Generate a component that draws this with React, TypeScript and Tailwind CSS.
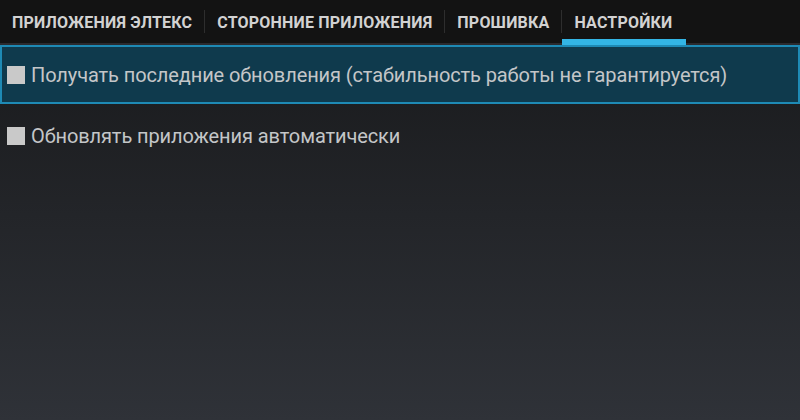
import React from "react";

const tabs = ["ПРИЛОЖЕНИЯ ЭЛТЕКС", "СТОРОННИЕ ПРИЛОЖЕНИЯ", "ПРОШИВКА", "НАСТРОЙКИ"];

function Checkbox() {
  return <span className="w-[18px] h-[18px] bg-[#c9c9c9] shrink-0" />;
}

export default function App() {
  return (
    <div
      className="w-[800px] h-[420px] flex flex-col bg-gradient-to-b from-[#17181a] to-[#2f3238] overflow-hidden"
      style={{ fontFamily: "Roboto, 'Noto Sans', sans-serif" }}
    >
      <div className="h-[45px] bg-[#131313] flex items-stretch border-b-2 border-[#2b2b2f] shrink-0">
        {tabs.map((t, i) => (
          <div key={t} className="flex items-stretch">
            {i > 0 && <div className="w-px bg-[#2e2e2e] my-[10px]" />}
            <div className="relative flex items-center pt-[3px] px-[12px] text-[16px] font-bold tracking-[0.2px] text-[#d2d2d2]">
              {t}
              {i === 3 && (
                <span className="absolute left-0 right-[-1px] bottom-[-2px] h-[6px] bg-[#33b5e5]" />
              )}
            </div>
          </div>
        ))}
      </div>
      <div className="h-[59px] bg-[#0f3a4d] border-2 border-[#1e8ab5] flex items-center pl-[5px] gap-[6px]">
        <Checkbox />
        <span className="text-[20px] tracking-[-0.1px] text-[#c4c6c8]">
          Получать последние обновления (стабильность работы не гарантируется)
        </span>
      </div>
      <div className="h-[64px] flex items-center pl-[7px] gap-[6px]">
        <Checkbox />
        <span className="text-[20px] tracking-[-0.1px] text-[#c4c6c8]">Обновлять приложения автоматически</span>
      </div>
    </div>
  );
}
